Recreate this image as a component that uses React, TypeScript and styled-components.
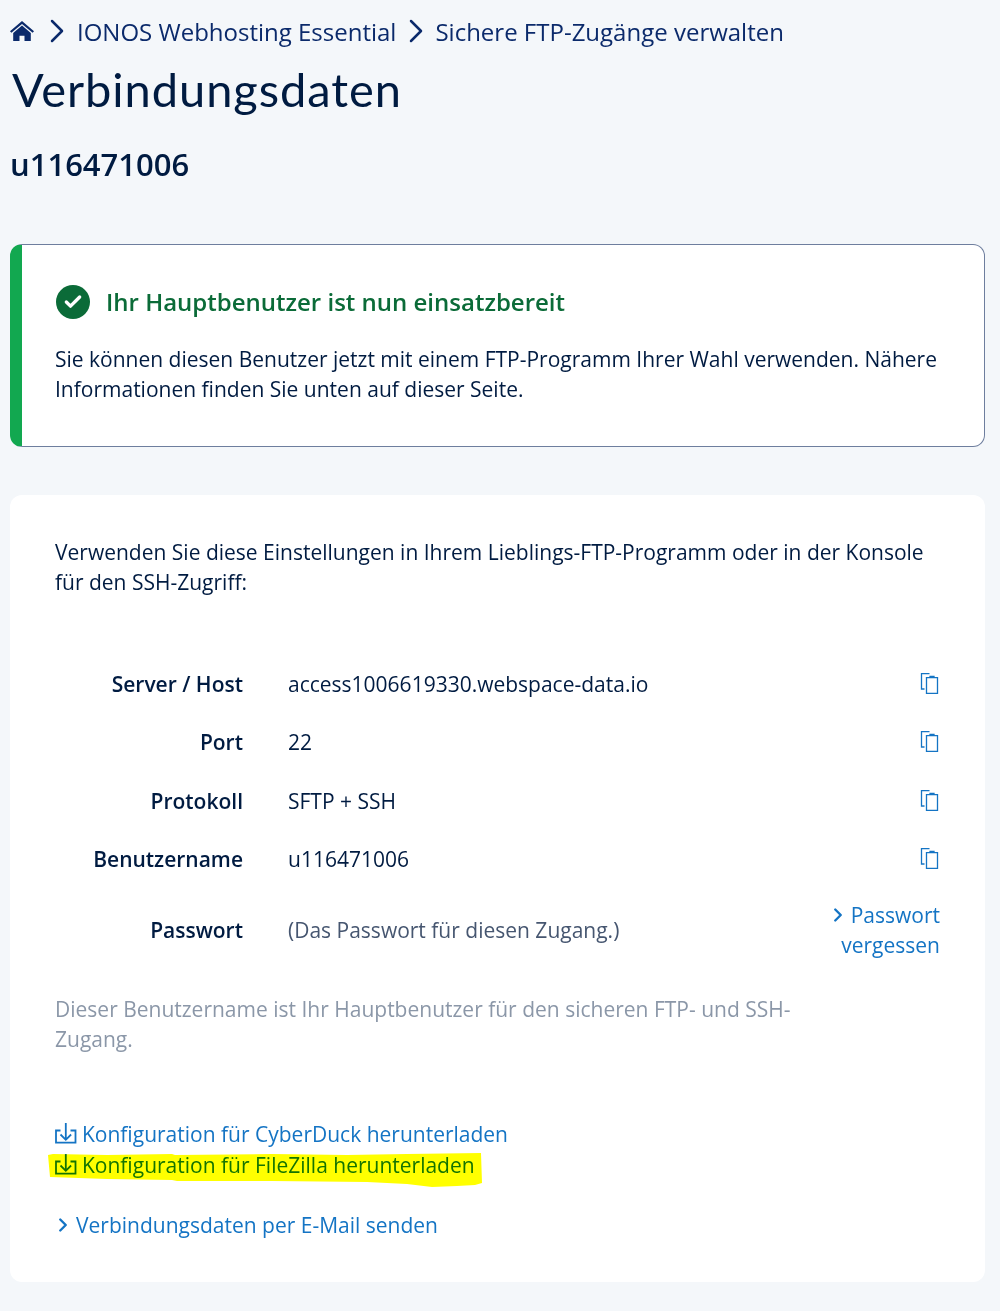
import styled, { createGlobalStyle } from 'styled-components';
import { Check, ChevronRight } from 'lucide-react';

const GlobalStyle = createGlobalStyle`
  html, body {
    margin: 0;
    background: #f4f7fa;
  }
  body {
    font-family: "Open Sans", "Liberation Sans", sans-serif;
    color: #001b41;
  }
  * {
    box-sizing: border-box;
  }
`;

const rows = [
  { label: 'Server / Host', value: 'access1006619330.webspace-data.io' },
  { label: 'Port', value: '22' },
  { label: 'Protokoll', value: 'SFTP + SSH' },
  { label: 'Benutzername', value: 'u116471006' },
];

function HomeIcon() {
  return (
    <svg width="24" height="20" viewBox="0 0 24 20" fill="#0b2a6b" aria-hidden="true">
      <path d="M12 0 0 10.200l1.400 1.600L12 2.900l10.600 8.900 1.400-1.600z" />
      <path d="M3.200 12 12 4.600l8.800 7.400v8h-6.300v-5.300h-5V20H3.200z" />
    </svg>
  );
}

function CopyIcon() {
  return (
    <svg width="20" height="22" viewBox="0 0 20 22" fill="none" stroke="#1474c4" strokeWidth="1.300" aria-hidden="true">
      <path d="M9.500 .7H1.500v15.300h3" />
      <path d="M6.500 4.700h11v15.600h-11z" />
      <path d="M10 4.700V3.300h4v1.400" />
    </svg>
  );
}

function DownloadIcon() {
  return (
    <svg width="22" height="22" viewBox="0 0 22 22" fill="none" stroke="currentColor" strokeWidth="1.800" aria-hidden="true">
      <path d="M5.500 7.500H1v12.200h19.500V7.500h-5" />
      <path d="M10.800 0v16.500M5.500 11.500l5.300 5.300 5.300-5.300" />
    </svg>
  );
}

export default function App() {
  return (
    <>
      <GlobalStyle />
      <Page>
        <Breadcrumb>
          <HomeIcon />
          <Crumb><ChevronRight size={40} strokeWidth={1.500} /></Crumb>
          <CrumbLink>IONOS Webhosting Essential</CrumbLink>
          <Crumb $tight><ChevronRight size={40} strokeWidth={1.500} /></Crumb>
          <CrumbLink>Sichere FTP-Zugänge verwalten</CrumbLink>
        </Breadcrumb>
        <Title>Verbindungsdaten</Title>
        <UserName>u116471006</UserName>

        <Alert>
          <AlertHead>
            <AlertBadge><Check size={20} strokeWidth={4} /></AlertBadge>
            <AlertTitle>Ihr Hauptbenutzer ist nun einsatzbereit</AlertTitle>
          </AlertHead>
          <AlertText>
            Sie können diesen Benutzer jetzt mit einem FTP-Programm Ihrer Wahl verwenden. Nähere
            Informationen finden Sie unten auf dieser Seite.
          </AlertText>
        </Alert>

        <Card>
          <Intro>
            Verwenden Sie diese Einstellungen in Ihrem Lieblings-FTP-Programm oder in der Konsole
            für den SSH-Zugriff:
          </Intro>

          <DataTable>
            {rows.map((row) => (
              <DataRow key={row.label}>
                <Label>{row.label}</Label>
                <Value>{row.value}</Value>
                <Action><CopyIcon /></Action>
              </DataRow>
            ))}
            <PasswordRow>
              <Label>Passwort</Label>
              <Muted>(Das Passwort für diesen Zugang.)</Muted>
              <ForgotLink>
                <ForgotChevron><ChevronRight size={22} strokeWidth={2.600} /></ForgotChevron>
                Passwort vergessen
              </ForgotLink>
            </PasswordRow>
          </DataTable>

          <Note>
            Dieser Benutzername ist Ihr Hauptbenutzer für den sicheren FTP- und SSH-Zugang.
          </Note>

          <Downloads>
            <DownloadLink><DownloadIcon />Konfiguration für CyberDuck herunterladen</DownloadLink>
            <DownloadLink>
              <DownloadIcon />Konfiguration für FileZilla herunterladen
              <Highlight viewBox="0 0 436 40" preserveAspectRatio="none" aria-hidden="true">
                <path
                  d="M1 6 L6 5 L60 6 L125 5 L128 6 L225 5 L300 6 L360 5 L434 4 L435 34 L428 36 L410 37 L385 38 L360 35 L320 33 L225 32 L130 32 L125 31 L60 30 L3 28 Z"
                  fill="#ffff00"
                />
              </Highlight>
            </DownloadLink>
          </Downloads>

          <MailLink>
            <MailChevron><ChevronRight size={22} strokeWidth={2.600} /></MailChevron>
            Verbindungsdaten per E-Mail senden
          </MailLink>
        </Card>
      </Page>
    </>
  );
}

const Page = styled.div`
  width: 1000px;
  height: 1311px;
  padding: 11px 15px 0 10px;
  overflow: hidden;
`;

const Breadcrumb = styled.nav`
  display: flex;
  align-items: center;
  height: 40px;
  color: #0b2a6b;
`;

const Crumb = styled.span<{ $tight?: boolean }>`
  display: flex;
  width: 40px;
  margin: ${(p) => (p.$tight ? '0 -1px 0 0' : '0 0 0 3px')};
`;

const CrumbLink = styled.span`
  font-size: 24px;
  white-space: nowrap;
`;

const Title = styled.h1`
  margin: 0 0 0 2px;
  font-family: "Lato", "Open Sans", sans-serif;
  font-size: 47px;
  line-height: 76px;
  font-weight: 400;
  letter-spacing: 0.95px;
  color: #001b41;
`;

const UserName = styled.h2`
  margin: 15px 0 0;
  font-size: 31px;
  line-height: 44px;
  font-weight: 600;
  color: #001b41;
`;

const Alert = styled.section`
  margin-top: 58px;
  height: 203px;
  padding: 39px 30px 0 33px;
  background: #fff;
  border: 1px solid #6e7e9e;
  border-left: 12px solid #12a850;
  border-radius: 12px;
`;

const AlertHead = styled.div`
  display: flex;
  align-items: center;
  gap: 16px;
  margin-left: 1px;
`;

const AlertBadge = styled.span`
  display: flex;
  align-items: center;
  justify-content: center;
  width: 34px;
  height: 34px;
  border-radius: 50%;
  background: #0b6b38;
  color: #fff;
`;

const AlertTitle = styled.h3`
  margin: 0;
  font-size: 24px;
  line-height: 36px;
  font-weight: 600;
  color: #0b6b38;
`;

const AlertText = styled.p`
  margin: 24px 0 0;
  font-size: 21px;
  line-height: 30px;
`;

const Card = styled.section`
  margin-top: 48px;
  height: 787px;
  padding: 42px 45px 0;
  background: #fff;
  border-radius: 12px;
`;

const Intro = styled.p`
  margin: 0;
  font-size: 21px;
  line-height: 30px;
`;

const DataTable = styled.div`
  margin-top: 58px;
`;

const DataRow = styled.div`
  display: grid;
  grid-template-columns: 188px 1fr 110px;
  column-gap: 45px;
  align-items: center;
  height: 58.300px;
  font-size: 21px;
`;

const PasswordRow = styled(DataRow)`
  height: 84px;
`;

const Label = styled.span`
  font-weight: 600;
  text-align: right;
  white-space: nowrap;
`;

const Value = styled.span`
  white-space: nowrap;
`;

const Muted = styled.span`
  color: #465670;
  white-space: nowrap;
`;

const Action = styled.span`
  display: flex;
  justify-content: flex-end;
`;

const ForgotLink = styled.a`
  display: block;
  text-align: right;
  line-height: 30px;
  color: #1474c4;
`;

const ForgotChevron = styled.span`
  display: inline-block;
  height: 22px;
  vertical-align: -3px;
  margin: 0 2px 0 -8px;
`;

const Note = styled.p`
  width: 760px;
  margin: 22px 0 0;
  font-size: 21px;
  line-height: 30px;
  color: #8b97a8;
`;

const Downloads = styled.div`
  margin-top: 64px;
`;

const DownloadLink = styled.a`
  position: relative;
  display: flex;
  align-items: center;
  gap: 5px;
  height: 31px;
  font-size: 21px;
  white-space: nowrap;
  color: #1474c4;
`;

const Highlight = styled.svg`
  position: absolute;
  left: -8px;
  top: 0;
  width: 436px;
  height: 40px;
  mix-blend-mode: multiply;
`;

const MailLink = styled.a`
  display: flex;
  align-items: center;
  gap: 2px;
  margin-top: 30px;
  font-size: 21px;
  line-height: 30px;
  color: #1474c4;
`;

const MailChevron = styled.span`
  display: flex;
  margin-left: -3px;
`;
